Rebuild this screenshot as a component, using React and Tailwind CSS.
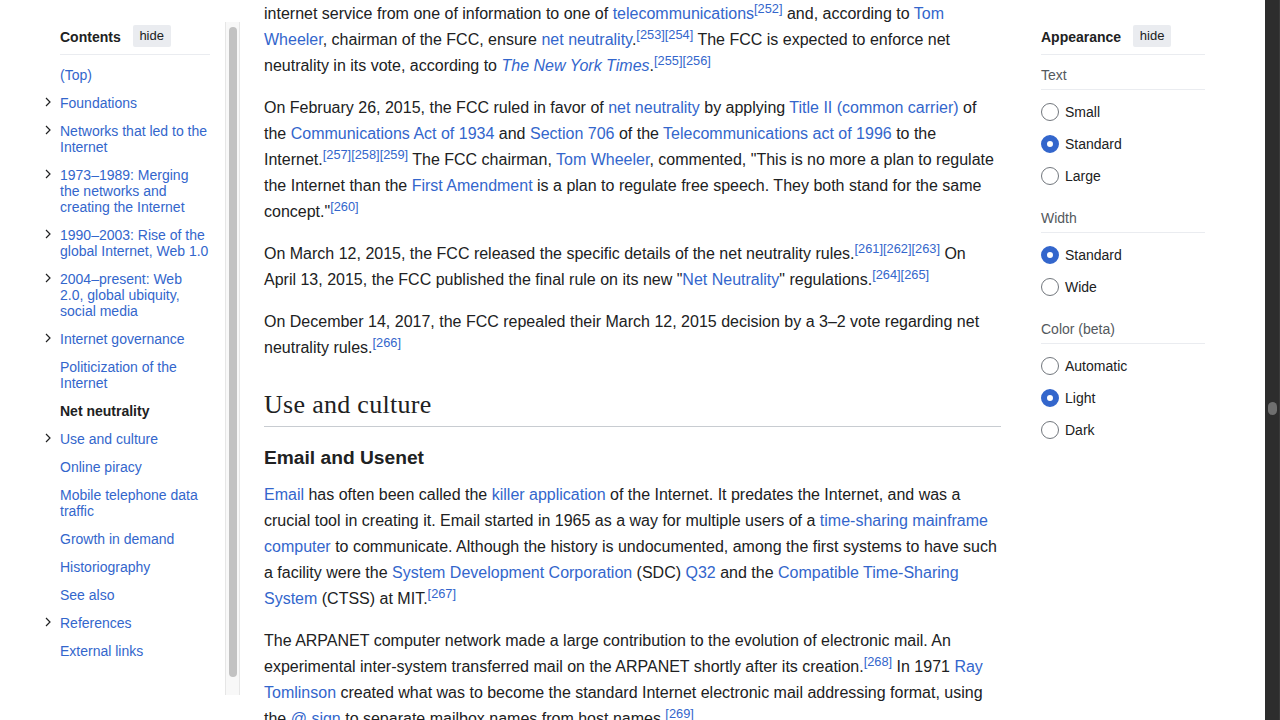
import React from 'react';

const A = ({ children }) => <a className="text-[#3366cc]">{children}</a>;
const Ref = ({ n }) => (
  <sup className="text-[12.8px] text-[#3366cc]">
    {n.map((x) => `[${x}]`).join('')}
  </sup>
);
// keep a word glued to the reference that follows it
const NB = ({ children }) => <span className="whitespace-nowrap">{children}</span>;

const tocItems = [
  { label: '(Top)' },
  { label: 'Foundations', toggle: true },
  { label: 'Networks that led to the Internet', toggle: true },
  { label: '1973–1989: Merging the networks and creating the Internet', toggle: true },
  { label: '1990–2003: Rise of the global Internet, Web 1.0', toggle: true },
  { label: '2004–present: Web 2.0, global ubiquity, social media', toggle: true, narrow: true },
  { label: 'Internet governance', toggle: true },
  { label: 'Politicization of the Internet' },
  { label: 'Net neutrality', active: true },
  { label: 'Use and culture', toggle: true },
  { label: 'Online piracy' },
  { label: 'Mobile telephone data traffic' },
  { label: 'Growth in demand' },
  { label: 'Historiography' },
  { label: 'See also' },
  { label: 'References', toggle: true },
  { label: 'External links' },
];

const Chevron = () => (
  <svg width="8" height="10" viewBox="0 0 8 10" className="mt-[2px]">
    <path d="M2 1 L6 5 L2 9" fill="none" stroke="#202122" strokeWidth="1.2" />
  </svg>
);

const HideButton = () => (
  <button className="ml-[12px] h-[22px] w-[38px] rounded-[2px] bg-[#eaecf0] text-[13px] leading-[22px] text-[#202122]">
    hide
  </button>
);

const Radio = ({ label, checked }) => (
  <div className="flex h-[32px] items-center">
    {checked ? (
      <span className="h-[18px] w-[18px] rounded-full border-[6px] border-[#3366cc] bg-white" />
    ) : (
      <span className="h-[18px] w-[18px] rounded-full border border-[#72777d] bg-white" />
    )}
    <span className="ml-[6px] text-[14px] text-[#202122]">{label}</span>
  </div>
);

const Group = ({ title, options, first }) => (
  <div className={first ? 'mt-[10px]' : 'mt-[16px]'}>
    <div className="border-b border-[#eaecf0] pb-[4px] text-[14px] leading-[20px] text-[#54595d]">{title}</div>
    <div className="mt-[6px]">
      {options.map((o) => (
        <Radio key={o.label} label={o.label} checked={o.checked} />
      ))}
    </div>
  </div>
);

const PanelHeader = ({ title }) => (
  <div className="flex h-[30px] items-start border-b border-[#eaecf0]">
    <span className="pt-[2px] text-[14px] font-bold leading-[20px]">{title}</span>
    <HideButton />
  </div>
);

export default function App() {
  return (
    <div className="flex h-[720px] w-[1280px] overflow-hidden bg-white font-['Liberation_Sans',Arial,sans-serif] text-[#202122]">
      {/* Contents sidebar */}
      <div className="flex w-[240px] shrink-0">
        <nav className="w-[210px] shrink-0 pl-[60px] pt-[25px]">
          <PanelHeader title="Contents" />
          <ul className="mt-[6px]">
            {tocItems.map((item) => (
              <li key={item.label} className="flex py-[6px] text-[14px] leading-[16px]">
                <span className="-ml-[16px] w-[16px] shrink-0">{item.toggle && <Chevron />}</span>
                <span
                  className={`${item.active ? 'font-bold text-[#202122]' : 'text-[#3366cc]'} ${
                    item.narrow ? 'max-w-[146px]' : ''
                  }`}
                >
                  {item.label}
                </span>
              </li>
            ))}
          </ul>
        </nav>
        <div className="ml-[15px] mt-[22px] h-[673px] w-[15px] border-x border-[#e6e6e6] bg-[#f8f8f8] pt-[5px]">
          <div className="mx-auto h-[650px] w-[8px] rounded-full bg-[#c2c2c2]" />
        </div>
      </div>

      {/* Article body */}
      <main className="ml-[24px] flex w-[737px] shrink-0 flex-col pt-[1px] text-[16px] leading-[26px]">
        <p className="mb-[16px]">
          internet service from one of information to one of <A>telecommunications</A>
          <Ref n={[252]} /> and, according to <A>Tom Wheeler</A>, chairman of the FCC, ensure{' '}
          <NB>
            <A>net neutrality</A>.<Ref n={[253, 254]} />
          </NB>{' '}
          The FCC is expected to enforce net neutrality in its vote, according to{' '}
          <NB>
            <i>
              <A>The New York Times</A>
            </i>
            .<Ref n={[255, 256]} />
          </NB>
        </p>
        <p className="mb-[16px]">
          On February 26, 2015, the FCC ruled in favor of <A>net neutrality</A> by applying{' '}
          <A>Title II (common carrier)</A> of the <A>Communications Act of 1934</A> and <A>Section 706</A> of the{' '}
          <A>Telecommunications act of 1996</A> to the{' '}
          <NB>
            Internet.
            <Ref n={[257, 258, 259]} />
          </NB>{' '}
          The FCC chairman, <A>Tom Wheeler</A>, commented, "This is no more a plan to regulate the Internet than
          the <A>First Amendment</A> is a plan to regulate free speech. They both stand for the same{' '}
          <NB>
            concept."
            <Ref n={[260]} />
          </NB>
        </p>
        <p className="mb-[16px]">
          On March 12, 2015, the FCC released the specific details of the net neutrality{' '}
          <NB>
            rules.
            <Ref n={[261, 262, 263]} />
          </NB>{' '}
          On April 13, 2015, the FCC published the final rule on its new "<A>Net Neutrality</A>"{' '}
          <NB>
            regulations.
            <Ref n={[264, 265]} />
          </NB>
        </p>
        <p className="mb-[16px]">
          On December 14, 2017, the FCC repealed their March 12, 2015 decision by a 3–2 vote regarding net
          neutrality{' '}
          <NB>
            rules.
            <Ref n={[266]} />
          </NB>
        </p>

        <h2 className="mt-[11px] border-b border-[#c8ccd1] pb-[5px] font-['Liberation_Serif',Georgia,serif] text-[26px] leading-[33px] tracking-[0.3px]">
          Use and culture
        </h2>
        <h3 className="mt-[15px] text-[19.2px] font-bold leading-[32px]">Email and Usenet</h3>

        <p className="mb-[16px] mt-[8px]">
          <A>Email</A> has often been called the <A>killer application</A> of the Internet. It predates the
          Internet, and was a crucial tool in creating it. Email started in 1965 as a way for multiple users of a{' '}
          <A>time-sharing mainframe computer</A> to communicate. Although the history is undocumented, among the
          first systems to have such a facility were the <A>System Development Corporation</A> (SDC) <A>Q32</A> and
          the <A>Compatible Time-Sharing System</A> (CTSS) at{' '}
          <NB>
            MIT.
            <Ref n={[267]} />
          </NB>
        </p>
        <p className="mb-[16px]">
          The ARPANET computer network made a large contribution to the evolution of electronic mail. An
          experimental inter-system transferred mail on the ARPANET shortly after its{' '}
          <NB>
            creation.
            <Ref n={[268]} />
          </NB>{' '}
          In 1971 <A>Ray Tomlinson</A> created what was to become the standard Internet electronic mail addressing
          format, using the <A>@ sign</A> to separate mailbox names from host{' '}
          <NB>
            names.
            <Ref n={[269]} />
          </NB>
        </p>
      </main>

      {/* Appearance panel */}
      <aside className="ml-[40px] w-[164px] shrink-0 pt-[25px]">
        <PanelHeader title="Appearance" />
        <Group
          first
          title="Text"
          options={[{ label: 'Small' }, { label: 'Standard', checked: true }, { label: 'Large' }]}
        />
        <Group title="Width" options={[{ label: 'Standard', checked: true }, { label: 'Wide' }]} />
        <Group
          title="Color (beta)"
          options={[{ label: 'Automatic' }, { label: 'Light', checked: true }, { label: 'Dark' }]}
        />
      </aside>

      <div className="flex-1" />

      {/* Window scrollbar */}
      <div className="w-[15px] shrink-0 border-r border-[#3a3a3a] bg-[#2d2d2d] pt-[402px]">
        <div className="mx-auto h-[13px] w-[9px] rounded-full bg-[#6f6f6f]" />
      </div>
    </div>
  );
}
